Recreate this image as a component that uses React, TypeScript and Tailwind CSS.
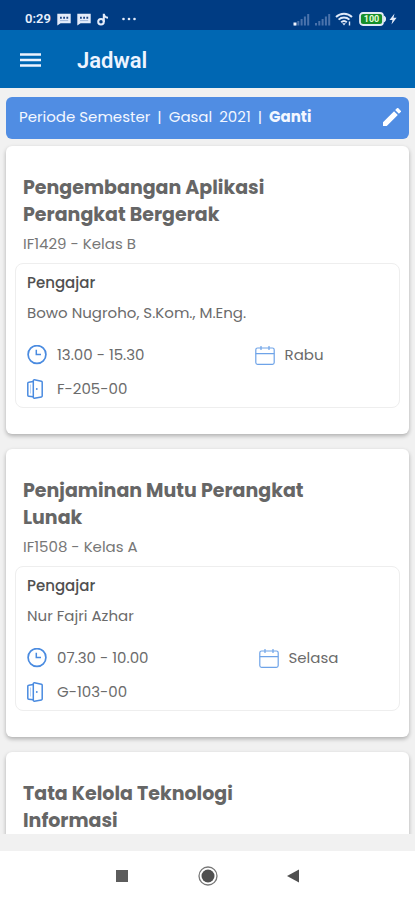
import { useState } from 'react';

interface Detail {
  kode: string;
  kelas: string;
  pengajar: string;
  jam: string;
  hari: string;
  ruang: string;
}

interface Jadwal {
  nama: string;
  detail?: Detail;
}

const jadwalList: Jadwal[] = [
  {
    nama: 'Pengembangan Aplikasi Perangkat Bergerak',
    detail: {
      kode: 'IF1429',
      kelas: 'B',
      pengajar: 'Bowo Nugroho, S.Kom., M.Eng.',
      jam: '13.00 - 15.30',
      hari: 'Rabu',
      ruang: 'F-205-00',
    },
  },
  {
    nama: 'Penjaminan Mutu Perangkat Lunak',
    detail: {
      kode: 'IF1508',
      kelas: 'A',
      pengajar: 'Nur Fajri Azhar',
      jam: '07.30 - 10.00',
      hari: 'Selasa',
      ruang: 'G-103-00',
    },
  },
  { nama: 'Tata Kelola Teknologi Informasi' },
];

const ChatIcon = () => (
  <svg width="14" height="13" viewBox="0 0 14 13" fill="none">
    <path d="M.3.8h13.400v9.400H3.600L.3 12.600z" fill="#e4ecfa" />
    <path d="M3 3.800h1.800v2H3zM6.200 3.800h1.800v2H6.200zM9.400 3.800h1.800v2H9.400z" fill="#1d4686" />
    <path d="M3 7.600h8.200" stroke="#8fa9d2" strokeWidth=".8" />
  </svg>
);

const NoteIcon = () => (
  <svg width="12" height="13" viewBox="0 0 12 13" fill="none" stroke="#e4ecfa" strokeWidth="2">
    <circle cx="4" cy="8.800" r="2.800" />
    <path d="M6.800 9V.8c.4 2.400 1.900 3.700 4.200 3.900" />
  </svg>
);

const SignalIcon = ({ dot = false }: { dot?: boolean }) => (
  <svg width="17" height="13" viewBox="0 0 17 13">
    <path d="M1 10h2v2.500H1zM4.300 8h2v4.500h-2zM7.600 6h2v6.500h-2zM10.900 3.500h2v9h-2zM14.200 1h2v11.500h-2z" fill="#4a73ac" />
    {dot && <path d="M.5 9.500h3v3h-3z" fill="#f1f5ff" />}
  </svg>
);

const WifiIcon = () => (
  <svg width="18" height="14" viewBox="0 0 18 14" fill="none" stroke="#dfe9f8" strokeWidth="1.900">
    <path d="M1 5c4.500-4.400 11.500-4.400 16 0" />
    <path d="M3.600 7.600c3-2.900 7.800-2.900 10.800 0" />
    <path d="M6.200 10.200c1.600-1.500 4-1.500 5.600 0" />
    <path d="M7.200 11.200h3.600L9 13.400z" fill="#dfe9f8" stroke="none" />
    <path d="M14.500 9.500v4" strokeWidth="1.400" />
  </svg>
);

const BatteryIcon = () => (
  <svg width="28" height="14" viewBox="0 0 28 14">
    <rect x="1" y="1" width="23" height="12" rx="3" fill="#168f2b" stroke="#e3ebf6" strokeWidth="1.800" />
    <path d="M25 4c2 .6 2 5.400 0 6z" fill="#e3ebf6" stroke="#e3ebf6" />
    <text x="12.500" y="10.300" textAnchor="middle" fontSize="9" fontWeight="700" fontFamily="Roboto, sans-serif" fill="#e6ffd9">
      100
    </text>
  </svg>
);

const ClockIcon = () => (
  <svg width="20" height="20" viewBox="0 0 20 20" fill="none" stroke="#4a8be0">
    <circle cx="10" cy="9.500" r="8.900" strokeWidth="1.700" />
    <path d="M9.300 4.800v4.700h4.700" strokeWidth="1.500" />
  </svg>
);

const CalendarIcon = () => (
  <svg width="20" height="20" viewBox="0 0 20 20" fill="none" stroke="#6ea3e8" strokeWidth="1.200">
    <rect x=".8" y="3" width="18.400" height="16.400" rx="1.800" />
    <path d="M.8 8.600h18.400M6 1v4M14 1v4" />
  </svg>
);

const DoorIcon = () => (
  <svg width="16" height="20" viewBox="0 0 16 20" fill="none" stroke="#4a8be0" strokeWidth="1.500" strokeLinejoin="round">
    <path d="M6.300 2.600 1.700 3.200a1 1 0 0 0-.9 1v12a1 1 0 0 0 .9 1l4.600.6" />
    <path d="M6.300 1.700a.9.900 0 0 1 1.100-.9l7 1.500a1 1 0 0 1 .8 1v13.600a1 1 0 0 1-.8 1l-7 1.300a.9.900 0 0 1-1.100-.9z" />
    <path d="M3.500 5.500v9" stroke="#a9c8f1" strokeWidth=".8" />
    <circle cx="9.800" cy="10" r=".9" fill="#4a8be0" stroke="none" />
  </svg>
);

function JadwalCard({ item }: { item: Jadwal }) {
  const { nama, detail } = item;

  return (
    <article className="shrink-0 rounded-md bg-white px-[9px] pt-7 pb-[26px] shadow-[0_2px_4px_rgba(0,0,0,0.28)]">
      <div className="px-2">
        <h2 className="max-w-[300px] text-[19px] leading-[27px] font-bold text-[#666666]">{nama}</h2>
        {detail && (
          <p className="mt-1 text-[15px] leading-6 text-[#777777]">
            {detail.kode} - Kelas {detail.kelas}
          </p>
        )}
      </div>
      {detail && (
        <div className="mt-[7px] rounded-lg border border-[#eeeeee] px-[11px] pt-[7px] pb-1.5 text-[15px] leading-6 text-[#6b6b6b]">
          <h3 className="font-medium text-[#505050]">Pengajar</h3>
          <p className="mt-1.5">{detail.pengajar}</p>
          <div className="mt-[18px] flex items-center gap-[110px]">
            <div className="flex items-center gap-2.5">
              <ClockIcon />
              <span>{detail.jam}</span>
            </div>
            <div className="flex items-center gap-2.5">
              <CalendarIcon />
              <span>{detail.hari}</span>
            </div>
          </div>
          <div className="mt-2.5 flex items-center gap-3.5">
            <DoorIcon />
            <span>{detail.ruang}</span>
          </div>
        </div>
      )}
    </article>
  );
}

export default function App() {
  const [periode] = useState({ semester: 'Gasal', tahun: '2021' });

  return (
    <div className="flex h-screen flex-col overflow-hidden bg-[#f1f1f1] font-['Poppins','Inter',sans-serif]">
      {/* Status bar */}
      <div className="flex h-[30px] shrink-0 items-center justify-between bg-[#003c83] pt-2 pr-[18px] pl-[25px] text-[#e8effc]">
        <div className="flex items-center gap-1.5">
          <span className="font-['Roboto',sans-serif] text-[13px] font-semibold">0:29</span>
          <ChatIcon />
          <ChatIcon />
          <NoteIcon />
          <svg className="ml-1.5" width="16" height="4" viewBox="0 0 16 4" fill="#e4ecfa">
            <circle cx="2.500" cy="2" r="1.300" />
            <circle cx="8" cy="2" r="1.300" />
            <circle cx="13.500" cy="2" r="1.300" />
          </svg>
        </div>
        <div className="flex items-center gap-1">
          <SignalIcon dot />
          <SignalIcon />
          <WifiIcon />
          <div className="flex items-center gap-0.5 pl-0.5">
            <BatteryIcon />
            <svg width="8" height="12" viewBox="0 0 8 12">
              <path d="M5.500.5.500 7H3.500L2.500 11.500 7.600 4.800H4.500z" fill="#e4ecfa" />
            </svg>
          </div>
        </div>
      </div>

      {/* App bar */}
      <header className="flex h-[58px] shrink-0 items-center gap-9 bg-[#0067b3] px-5 pt-1">
        <button type="button" aria-label="Menu">
          <svg width="21" height="16" viewBox="0 0 21 16" stroke="#eef4ff" strokeWidth="2.600">
            <path d="M0 1.500h21M0 7h21M0 12.500h21" />
          </svg>
        </button>
        <h1 className="font-['Roboto',sans-serif] text-[22px] leading-7 font-semibold text-[#eef4ff]">Jadwal</h1>
      </header>

      <main className="flex min-h-0 flex-1 flex-col pt-[9px] pb-[17px]">
        {/* Periode */}
        <div className="mx-1.5 flex h-[42px] shrink-0 items-center justify-between rounded-md bg-[#508de3] pr-2 pb-0.5 pl-[13px] text-[#f3f7ff]">
          <p className="flex items-center gap-[7px] text-[15px] leading-6">
            <span>Periode Semester</span>
            <span>|</span>
            <span>{periode.semester}</span>
            <span>{periode.tahun}</span>
            <span>|</span>
            <button type="button" className="font-bold">Ganti</button>
          </p>
          <button type="button" aria-label="Ubah periode">
            <svg width="18" height="18" viewBox="3 3 18 18" fill="#ffffff">
              <path d="M3 17.250V21h3.750L17.810 9.940l-3.750-3.750L3 17.250zM20.710 7.040a1 1 0 0 0 0-1.410l-2.340-2.340a1 1 0 0 0-1.410 0l-1.830 1.830 3.750 3.750 1.830-1.830z" />
            </svg>
          </button>
        </div>

        <section className="flex min-h-0 flex-1 flex-col gap-[15px] overflow-hidden px-1.5 pt-[7px]">
          {jadwalList.map((item) => (
            <JadwalCard key={item.nama} item={item} />
          ))}
        </section>
      </main>

      {/* System navigation */}
      <nav className="flex h-[49px] shrink-0 items-center justify-center gap-[66px] bg-white">
        <button type="button" aria-label="Recent apps">
          <svg width="20" height="20" viewBox="0 0 20 20">
            <rect x="4" y="4" width="12" height="12" fill="#5c5c5c" />
          </svg>
        </button>
        <button type="button" aria-label="Home">
          <svg width="20" height="20" viewBox="0 0 20 20" fill="none">
            <circle cx="10" cy="10" r="9" stroke="#777777" strokeWidth="1.300" />
            <circle cx="10" cy="10" r="6.500" fill="#505050" />
          </svg>
        </button>
        <button type="button" aria-label="Back">
          <svg width="20" height="20" viewBox="0 0 20 20">
            <path d="M15 3.500v13L3 10z" fill="#505050" />
          </svg>
        </button>
      </nav>
    </div>
  );
}
